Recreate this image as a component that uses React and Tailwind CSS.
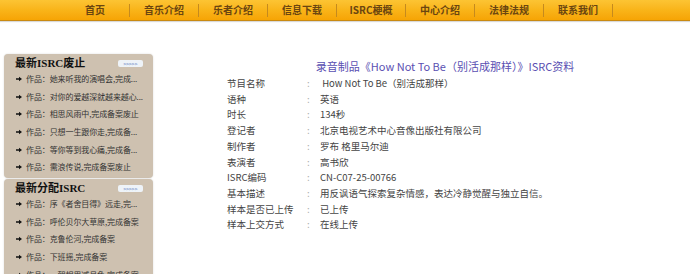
import React from "react";

const navItems = ["首页", "音乐介绍", "乐者介绍", "信息下载", "ISRC梗概", "中心介绍", "法律法规", "联系我们"];

const box1 = [
  "作品：她来听我的演唱会,完成...",
  "作品：对你的爱越深就越来越心...",
  "作品：相思风雨中,完成备案废止",
  "作品：只想一生跟你走,完成备...",
  "作品：等你等到我心痛,完成备...",
  "作品：需浪传说,完成备案废止",
];

const box2 = [
  "作品：序《者舍目得》远走,完...",
  "作品：呼伦贝尔大草原,完成备案",
  "作品：克鲁伦河,完成备案",
  "作品：下班摇,完成备案",
  "作品：一朝相思减月色,完成备案",
];

const rows = [
  ["节目名称", " How Not To Be（别活成那样）"],
  ["语种", "英语"],
  ["时长", "134秒"],
  ["登记者", "北京电视艺术中心音像出版社有限公司"],
  ["制作者", "罗布 格里马尔迪"],
  ["表演者", "高书欣"],
  ["ISRC编码", "CN-C07-25-00766"],
  ["基本描述", "用反讽语气探索复杂情感，表达冷静觉醒与独立自信。"],
  ["样本是否已上传", "已上传"],
  ["样本上交方式", "在线上传"],
];

const Arrow = () => (
  <svg width="6" height="6" viewBox="0 0 6 6" className="shrink-0">
    <path d="M0 2.3H3V0.8L6 3L3 5.2V3.7H0Z" fill="#111" />
  </svg>
);

const Box = ({ title, items }) => (
  <div className="rounded-[4px] bg-[#cec1b0] pt-[2px] pb-[2px] shadow-[0_0_2px_rgba(0,0,0,0.15)]">
    <div className="flex h-[14px] items-center justify-between pl-[11px] pr-[10px]">
      <span className="text-[11px] font-bold leading-none text-[#111]" style={{ fontFamily: '"Liberation Serif", "Noto Sans CJK SC", serif' }}>
        {title}
      </span>
      <span className="flex h-[7px] w-[25px] items-center justify-center rounded-[2px] bg-[#eef3f8] text-[5px] leading-none text-[#3a5fb0]">
        {">>>>>"}
      </span>
    </div>
    {items.map((t, i) => (
      <div key={i} className="flex h-[17.7px] items-center gap-[4px] pl-[12px] pr-[1px]">
        <Arrow />
        <span className="whitespace-nowrap text-[8px] leading-none tracking-[-0.1px] text-[#333]">{t}</span>
      </div>
    ))}
  </div>
);

export default function App() {
  return (
    <div className="h-[274px] w-[690px] overflow-hidden bg-white" style={{ fontFamily: '"Noto Sans CJK SC", "Noto Sans", sans-serif' }}>
      <div className="h-[21px] bg-gradient-to-b from-[#fcc433] via-[#f9b418] to-[#f6a404] border-b border-[#c98a12] shadow-[0_1px_1px_rgba(0,0,0,0.15)]">
        <div className="flex h-full items-center pl-[61px]">
          {navItems.map((n) => (
            <div key={n} className="flex h-full w-[69px] items-center">
              <span className="flex-1 text-center text-[10px] font-bold leading-none text-[#6a4510]">{n}</span>
              <span className="h-[13px] w-px bg-[#c58a1e]" />
            </div>
          ))}
        </div>
      </div>
      <div className="flex">
        <div className="ml-[4px] mt-[33px] flex w-[149px] flex-col gap-[1px]">
          <Box title="最新ISRC废止" items={box1} />
          <Box title="最新分配ISRC" items={box2} />
        </div>
        <div className="ml-[7px] flex-1 pt-[38px]">
          <div className="ml-[40px] text-center text-[11px] leading-[14px] text-[#5a4fb2]">
            录音制品《How Not To Be（别活成那样）》ISRC资料
          </div>
          <div className="mt-[3px] pl-[67px]">
            {rows.map(([k, v]) => (
              <div key={k} className="flex h-[15.7px] items-center text-[9.5px] leading-none text-[#444]">
                <span className="w-[80px]">{k}</span>
                <span className="w-[13px] text-[#aaa]">:</span>
                <span className="whitespace-pre">{v}</span>
              </div>
            ))}
          </div>
        </div>
      </div>
    </div>
  );
}
